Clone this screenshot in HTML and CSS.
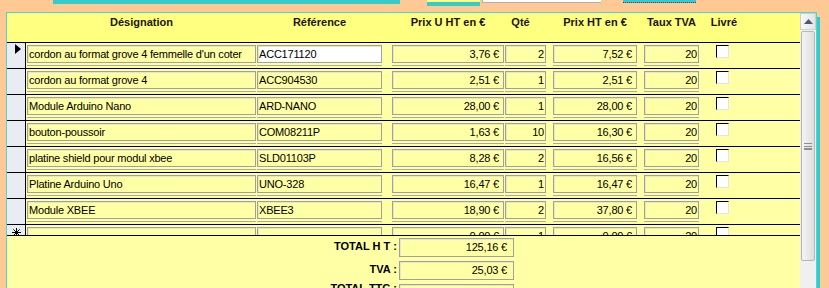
FILE: index.html
```html
<!DOCTYPE html>
<html lang="fr">
<head>
    <meta charset="UTF-8">
    <title>Commande - détail</title>
    <link rel="stylesheet" href="styles.css">
</head>
<body>
    <div class="tabs">
        <div class="tab-main"></div>
        <div class="tab-small"></div>
        <div class="tab-white"></div>
        <div class="tab-dotted"></div>
    </div>

    <div class="panel">
        <div class="sheet">
            <div class="head">
                <div class="sel"></div>
                <div class="c-des">Désignation</div>
                <div class="c-ref">Référence</div>
                <div class="c-pu">Prix U HT en €</div>
                <div class="c-qty">Qté</div>
                <div class="c-pht">Prix HT en €</div>
                <div class="c-tva">Taux TVA</div>
                <div class="c-chk">Livré</div>
            </div>

            <div class="rows">
                <div class="row">
                    <div class="sel"><span class="arrow"></span></div>
                    <div class="cell c-des"><div class="box">cordon au format grove 4 femmelle d'un coter</div></div>
                    <div class="cell c-ref"><div class="box active">ACC171120</div></div>
                    <div class="cell c-pu money"><div class="box">3,76 €</div></div>
                    <div class="cell c-qty num"><div class="box">2</div></div>
                    <div class="cell c-pht money"><div class="box">7,52 €</div></div>
                    <div class="cell c-tva num"><div class="box">20</div></div>
                    <div class="check"></div>
                </div>
                <div class="row">
                    <div class="sel"></div>
                    <div class="cell c-des"><div class="box">cordon au format grove 4</div></div>
                    <div class="cell c-ref"><div class="box">ACC904530</div></div>
                    <div class="cell c-pu money"><div class="box">2,51 €</div></div>
                    <div class="cell c-qty num"><div class="box">1</div></div>
                    <div class="cell c-pht money"><div class="box">2,51 €</div></div>
                    <div class="cell c-tva num"><div class="box">20</div></div>
                    <div class="check"></div>
                </div>
                <div class="row">
                    <div class="sel"></div>
                    <div class="cell c-des"><div class="box">Module Arduino Nano</div></div>
                    <div class="cell c-ref"><div class="box">ARD-NANO</div></div>
                    <div class="cell c-pu money"><div class="box">28,00 €</div></div>
                    <div class="cell c-qty num"><div class="box">1</div></div>
                    <div class="cell c-pht money"><div class="box">28,00 €</div></div>
                    <div class="cell c-tva num"><div class="box">20</div></div>
                    <div class="check"></div>
                </div>
                <div class="row">
                    <div class="sel"></div>
                    <div class="cell c-des"><div class="box">bouton-poussoir</div></div>
                    <div class="cell c-ref"><div class="box">COM08211P</div></div>
                    <div class="cell c-pu money"><div class="box">1,63 €</div></div>
                    <div class="cell c-qty num"><div class="box">10</div></div>
                    <div class="cell c-pht money"><div class="box">16,30 €</div></div>
                    <div class="cell c-tva num"><div class="box">20</div></div>
                    <div class="check"></div>
                </div>
                <div class="row">
                    <div class="sel"></div>
                    <div class="cell c-des"><div class="box">platine shield pour modul xbee</div></div>
                    <div class="cell c-ref"><div class="box">SLD01103P</div></div>
                    <div class="cell c-pu money"><div class="box">8,28 €</div></div>
                    <div class="cell c-qty num"><div class="box">2</div></div>
                    <div class="cell c-pht money"><div class="box">16,56 €</div></div>
                    <div class="cell c-tva num"><div class="box">20</div></div>
                    <div class="check"></div>
                </div>
                <div class="row">
                    <div class="sel"></div>
                    <div class="cell c-des"><div class="box">Platine Arduino Uno</div></div>
                    <div class="cell c-ref"><div class="box">UNO-328</div></div>
                    <div class="cell c-pu money"><div class="box">16,47 €</div></div>
                    <div class="cell c-qty num"><div class="box">1</div></div>
                    <div class="cell c-pht money"><div class="box">16,47 €</div></div>
                    <div class="cell c-tva num"><div class="box">20</div></div>
                    <div class="check"></div>
                </div>
                <div class="row">
                    <div class="sel"></div>
                    <div class="cell c-des"><div class="box">Module XBEE</div></div>
                    <div class="cell c-ref"><div class="box">XBEE3</div></div>
                    <div class="cell c-pu money"><div class="box">18,90 €</div></div>
                    <div class="cell c-qty num"><div class="box">2</div></div>
                    <div class="cell c-pht money"><div class="box">37,80 €</div></div>
                    <div class="cell c-tva num"><div class="box">20</div></div>
                    <div class="check"></div>
                </div>
                <div class="row">
                    <div class="sel">
                        <svg class="star" width="9" height="9" viewBox="0 0 9 9">
                            <path d="M4.5 0V9M0 4.5H9M1.3 1.3L7.7 7.7M7.7 1.3L1.3 7.7" stroke="#000" stroke-width="1"/>
                        </svg>
                    </div>
                    <div class="cell c-des"><div class="box"></div></div>
                    <div class="cell c-ref"><div class="box"></div></div>
                    <div class="cell c-pu money"><div class="box">0,00 €</div></div>
                    <div class="cell c-qty num"><div class="box">1</div></div>
                    <div class="cell c-pht money"><div class="box">0,00 €</div></div>
                    <div class="cell c-tva num"><div class="box">20</div></div>
                    <div class="check"></div>
                </div>
            </div>

            <div class="totals">
                <div class="total">
                    <div class="label">TOTAL H T :</div>
                    <div class="value">125,16 €</div>
                </div>
                <div class="total">
                    <div class="label">TVA :</div>
                    <div class="value">25,03 €</div>
                </div>
                <div class="total ttc">
                    <div class="label">TOTAL TTC :</div>
                    <div class="value">150,19 €</div>
                </div>
            </div>
        </div>

        <div class="scrollbar">
            <div class="sb-btn">
                <svg width="9" height="5" viewBox="0 0 9 5"><path d="M4.5 0L9 5H0Z" fill="#4b5670"/></svg>
            </div>
            <div class="sb-thumb">
                <div class="grip"></div>
            </div>
        </div>
    </div>
</body>
</html>
```

FILE: styles.css
```css
* {
    margin: 0;
    padding: 0;
    box-sizing: border-box;
}

body {
    height: 288px;
    overflow: hidden;
    background-color: #ffc996;
    font-family: "Liberation Sans", Arial, sans-serif;
    font-size: 11px;
    color: #000;
}

/* onglets en haut */
.tabs {
    display: flex;
    align-items: flex-start;
    height: 12px;
}

.tab-main {
    margin-left: 53px;
    width: 347px;
    height: 4px;
    background-color: #33cccc;
}

.tab-small {
    margin-left: 27px;
    width: 53px;
    height: 6px;
    background-color: #33cccc;
    border-top: 2px solid #ffff80;
}

.tab-white {
    margin-left: 2px;
    width: 119px;
    height: 3px;
    background-color: #fff;
    border-left: 1px solid #b0b0b0;
    border-bottom: 1px solid #b0b0b0;
}

.tab-dotted {
    margin-left: 22px;
    width: 73px;
    height: 3px;
    background-color: #33cccc;
    border-bottom: 1px dotted #6a2a5a;
}

/* sous-formulaire */
.panel {
    display: flex;
    margin-left: 6px;
    width: 811px;
    height: 276px;
    border: 1px solid #4fd4d4;
    border-bottom: none;
    box-shadow: 3px 5px 0 #33cccc;
}

.sheet {
    width: 793px;
    display: flex;
    flex-direction: column;
    background-color: #ffffa5;
}

.head {
    display: flex;
    flex-shrink: 0;
    height: 29px;
    padding-top: 2px;
    line-height: 14px;
    background-color: #ffff80;
    font-weight: bold;
    color: #1c1408;
    text-align: center;
}

.head .sel {
    width: 19px;
}

.rows {
    flex-shrink: 0;
    height: 194px;
    overflow: hidden;
    border-bottom: 1px solid #000;
}

.row {
    display: flex;
    height: 26px;
    border-top: 1px solid #000;
}

.row .sel {
    width: 19px;
    background-color: #e9ecf3;
    border-right: 1px solid #000;
}

.arrow {
    display: block;
    width: 0;
    height: 0;
    margin: 1px 0 0 8px;
    border-left: 6px solid #000;
    border-top: 5px solid transparent;
    border-bottom: 5px solid transparent;
}

.star {
    display: block;
    margin: 3px 0 0 5px;
}

/* colonnes */
.c-des { margin-left: 1px; width: 229px; }
.c-ref { margin-left: 1px; width: 125px; }
.c-pu { margin-left: 10px; width: 112px; }
.c-qty { margin-left: 1px; width: 41px; }
.c-pht { margin-left: 7px; width: 84px; }
.c-tva { margin-left: 7px; width: 55px; }

.head .c-qty { padding-right: 10px; }
.head .c-chk { margin-left: 7px; width: 36px; }

.cell {
    display: flex;
    flex-direction: column;
    gap: 2px;
    margin-top: 2px;
}

.cell::after {
    content: "";
    height: 1px;
    background-color: #a8a8a8;
}

.box {
    height: 18px;
    padding: 0 2px 0 1px;
    border: 1px solid #a0a0a0;
    box-shadow: inset 1px 1px 0 #e6e6c8;
    line-height: 16px;
    white-space: nowrap;
    overflow: hidden;
    letter-spacing: -0.2px;
}

.box.active {
    background-color: #fff;
}

.money .box {
    text-align: right;
    padding-right: 4px;
}

.num .box {
    text-align: right;
    padding-right: 1px;
}

.check {
    margin: 2px 0 0 17px;
    width: 13px;
    height: 13px;
    background-color: #fff;
    border: 1px solid;
    border-color: #000 #e4e4e4 #e4e4e4 #000;
}

/* totaux */
.totals {
    padding-top: 2px;
}

.total {
    display: flex;
    align-items: flex-start;
    margin-bottom: 4px;
}

.total .label {
    width: 390px;
    margin-top: 1px;
    line-height: 14px;
    text-align: right;
    font-weight: bold;
}

.total.ttc .label {
    margin-top: -3px;
}

.total .value {
    margin-left: 2px;
    width: 115px;
    height: 19px;
    padding-right: 6px;
    border: 1px solid #a0a0a0;
    box-shadow: inset 1px 1px 0 #e6e6c8;
    line-height: 17px;
    text-align: right;
    letter-spacing: -0.2px;
}

/* barre de défilement */
.scrollbar {
    width: 16px;
    display: flex;
    flex-direction: column;
    background-color: #f0f0f0;
}

.sb-btn {
    height: 17px;
    display: flex;
    align-items: center;
    justify-content: center;
    border: 1px solid #cfcfcf;
    background: linear-gradient(to right, #f8f8f8, #e4e4e4);
}

.sb-thumb {
    margin: 1px 1px 0 1px;
    height: 230px;
    display: flex;
    align-items: center;
    justify-content: center;
    border: 1px solid #b6b6b6;
    border-radius: 2px;
    background: linear-gradient(to right, #f4f4f4, #dedede);
}

.grip {
    width: 8px;
    height: 7px;
    border-top: 1px solid #8c8c8c;
    border-bottom: 1px solid #8c8c8c;
    background: linear-gradient(#8c8c8c, #8c8c8c) 0 2px / 8px 1px no-repeat,
                linear-gradient(#8c8c8c, #8c8c8c) 0 4px / 8px 1px no-repeat;
}
```
